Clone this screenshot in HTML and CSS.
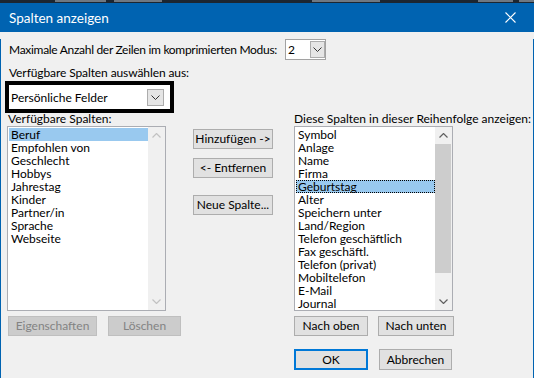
FILE: index.html
```html
<!DOCTYPE html>
<html lang="de">
<head>
<meta charset="utf-8">
<title>Spalten anzeigen</title>
<link rel="stylesheet" href="styles.css">
</head>
<body>
<div class="strip">
  <span class="frag f1"></span>
  <span class="frag f2"></span>
  <span class="frag f3"></span>
  <span class="frag f4"></span>
  <span class="frag f5"></span>
</div>
<div class="titlebar">
  <span class="title">Spalten anzeigen</span>
  <svg class="close" width="11" height="11" viewBox="0 0 11 11"><path d="M0.5 0.5 L10.5 10.5 M10.5 0.5 L0.5 10.5" stroke="#fff" stroke-width="1.1" fill="none"/></svg>
</div>
<div class="win">
  <div class="row1">
    <span class="lbl1">Maximale Anzahl der Zeilen im komprimierten Modus:</span>
    <div class="combo small">
      <span class="cval">2</span>
      <span class="dd"><svg width="9" height="5" viewBox="0 0 9 5"><polyline points="0.5,0.5 4.5,4.5 8.5,0.5" stroke="#333" fill="none"/></svg></span>
    </div>
  </div>
  <div class="lbl2">Verfügbare Spalten auswählen aus:</div>
  <div class="hl">
    <span class="cval big">Persönliche Felder</span>
    <span class="dd dd2"><svg width="9" height="5" viewBox="0 0 9 5"><polyline points="0.5,0.5 4.5,4.5 8.5,0.5" stroke="#333" fill="none"/></svg></span>
  </div>
  <div class="labels">
    <span class="lblL">Verfügbare Spalten:</span>
    <span class="lblR">Diese Spalten in dieser Reihenfolge anzeigen:</span>
  </div>
  <div class="lists">
    <div class="list left">
      <ul class="items">
        <li class="sel">Beruf</li>
        <li>Empfohlen von</li>
        <li>Geschlecht</li>
        <li>Hobbys</li>
        <li>Jahrestag</li>
        <li>Kinder</li>
        <li>Partner/in</li>
        <li>Sprache</li>
        <li>Webseite</li>
      </ul>
      <div class="sbar disabled">
        <span class="arr"><svg width="9" height="5" viewBox="0 0 9 5"><polyline points="0.5,4.5 4.5,0.5 8.5,4.5" fill="none"/></svg></span>
        <span class="track"></span>
        <span class="arr"><svg width="9" height="5" viewBox="0 0 9 5"><polyline points="0.5,0.5 4.5,4.5 8.5,0.5" fill="none"/></svg></span>
      </div>
    </div>
    <div class="mid">
      <button class="btn b1">Hinzufügen -&gt;</button>
      <button class="btn b2">&lt;- Entfernen</button>
      <button class="btn b3">Neue Spalte...</button>
    </div>
    <div class="list right">
      <ul class="items">
        <li>Symbol</li>
        <li>Anlage</li>
        <li>Name</li>
        <li>Firma</li>
        <li class="sel focus">Geburtstag</li>
        <li>Alter</li>
        <li>Speichern unter</li>
        <li>Land/Region</li>
        <li>Telefon geschäftlich</li>
        <li>Fax geschäftl.</li>
        <li>Telefon (privat)</li>
        <li>Mobiltelefon</li>
        <li>E-Mail</li>
        <li>Journal</li>
      </ul>
      <div class="sbar">
        <span class="arr"><svg width="9" height="5" viewBox="0 0 9 5"><polyline points="0.5,4.5 4.5,0.5 8.5,4.5" fill="none"/></svg></span>
        <span class="thumb"></span>
        <span class="track"></span>
        <span class="arr"><svg width="9" height="5" viewBox="0 0 9 5"><polyline points="0.5,0.5 4.5,4.5 8.5,0.5" fill="none"/></svg></span>
      </div>
    </div>
  </div>
  <div class="brow">
    <button class="btn dis eig">Eigenschaften</button>
    <button class="btn dis los">Löschen</button>
    <button class="btn up">Nach oben</button>
    <button class="btn down">Nach unten</button>
  </div>
  <div class="orow">
    <button class="btn ok">OK</button>
    <button class="btn cancel">Abbrechen</button>
  </div>
</div>
</body>
</html>
```

FILE: styles.css
```css
* { box-sizing: border-box; }
html, body { margin: 0; padding: 0; }
body {
  width: 534px;
  height: 378px;
  overflow: hidden;
  background: #f0f0f0;
  font-family: Lato, "Liberation Sans", sans-serif;
  font-size: 12px;
  color: #000;
}
.strip {
  height: 3px;
  overflow: hidden;
  background: #1c2631;
  display: flex;
  align-items: flex-start;
}
.frag {
  height: 2px;
  background: #6f7882;
}
.f1 { margin-left: 55px; width: 60px; }
.f2 { margin-left: 8px; width: 55px; }
.f3 { margin-left: 150px; width: 80px; }
.f4 { margin-left: 98px; width: 40px; }
.f5 { margin-left: 6px; width: 18px; }
.titlebar {
  height: 29px;
  background: #0063b1;
  display: flex;
  align-items: center;
  color: #fff;
  padding-left: 9px;
}
.title { font-size: 13.5px; }
.close { margin-left: auto; margin-right: 18px; }
.win {
  height: 346px;
  border-left: 1px solid #0063b1;
  border-right: 1px solid #0063b1;
  background: #f0f0f0;
}
.row1 {
  margin-top: 7px;
  height: 21px;
  display: flex;
  align-items: center;
}
.lbl1 { width: 284px; padding-left: 8px; white-space: nowrap; letter-spacing: -0.3px; }
.combo {
  background: #fff;
  border: 1px solid #a2a2a2;
  display: flex;
  align-items: center;
}
.small { width: 41px; height: 21px; }
.cval { padding-left: 2px; }
.dd {
  margin-left: auto;
  width: 15px;
  height: 17px;
  background: #e5e5e5;
  border: 1px solid #acacac;
  display: flex;
  align-items: center;
  justify-content: center;
}
.lbl2 {
  margin-top: 5px;
  height: 16px;
  line-height: 16px;
  padding-left: 8px;
  letter-spacing: -0.1px;
}
.hl {
  margin-left: 4px;
  width: 169px;
  height: 32px;
  border: 4px solid #000;
  background: #fff;
  display: flex;
  align-items: center;
}
.big { padding-left: 2px; }
.dd2 { width: 17px; height: 17px; margin-right: 6px; }
.labels {
  height: 13px;
  line-height: 11px;
  display: flex;
}
.lblL { margin-left: 7px; width: 286px; }
.lists {
  display: flex;
  height: 185px;
}
.list {
  width: 159px;
  height: 185px;
  border: 1px solid #abadb3;
  background: #fff;
  display: flex;
}
.left { margin-left: 6px; }
.right { margin-left: 21px; }
.items {
  list-style: none;
  margin: 0;
  padding: 1px 0 0 1px;
  flex: 1;
}
.items li {
  height: 13px;
  line-height: 13px;
  padding-left: 2px;
  white-space: nowrap;
}
.items li.sel { background: #99c9ef; }
.items li.focus { outline: 1px dotted #000; outline-offset: -1px; }
.sbar {
  width: 17px;
  background: #f0f0f0;
  display: flex;
  flex-direction: column;
}
.sbar .arr {
  height: 17px;
  display: flex;
  align-items: center;
  justify-content: center;
}
.sbar polyline { stroke: #606060; stroke-width: 1.2; }
.sbar.disabled polyline { stroke: #c2c2c2; }
.sbar .track { flex: 1; }
.sbar .thumb { height: 129px; background: #cdcdcd; margin: 0 1px 0 0; }
.mid {
  margin-left: 27px;
  width: 80px;
  display: flex;
  flex-direction: column;
}
.btn {
  font-family: inherit;
  font-size: 12px;
  color: #000;
  background: #e1e1e1;
  border: 1px solid #adadad;
  padding: 0;
  height: 20px;
  line-height: 16px;
}
.mid .btn { width: 80px; }
.b1 { margin-top: 3px; }
.b2 { margin-top: 9px; }
.b3 { margin-top: 17px; }
.brow {
  margin-top: 5px;
  display: flex;
  height: 20px;
}
.dis { background: #cccccc; border-color: #bfbfbf; color: #838383; }
.eig { margin-left: 7px; width: 89px; }
.los { margin-left: 11px; width: 73px; }
.up { margin-left: 113px; width: 74px; }
.down { margin-left: 10px; width: 76px; }
.orow {
  margin-top: 13px;
  display: flex;
}
.ok { margin-left: 293px; width: 74px; height: 21px; border: 2px solid #0078d7; }
.cancel { margin-left: 11px; width: 73px; height: 21px; }
```
